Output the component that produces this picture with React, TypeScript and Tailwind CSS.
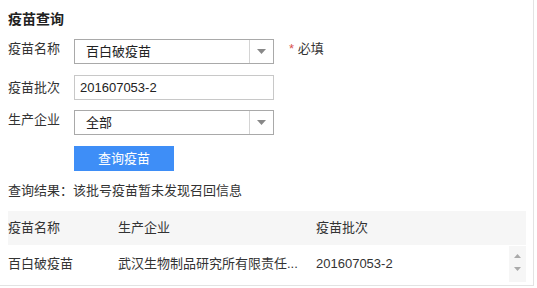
import React from 'react';

const font = { fontFamily: '"Liberation Sans", "Noto Sans CJK SC", sans-serif' };

function Arrow() {
  return (
    <svg width="9" height="5" viewBox="0 0 9 5">
      <path d="M0 0h9L4.5 5z" fill="#888" />
    </svg>
  );
}

function SelectBox({ value }: { value: string }) {
  return (
    <div className="flex h-[25px] w-[200px] items-stretch border border-[#a9a9a9] bg-white">
      <div className="flex flex-1 items-center pl-[11px] text-[13px] text-[#222]">{value}</div>
      <div className="flex w-[24px] items-center justify-center border-l border-[#d4d4d4]">
        <Arrow />
      </div>
    </div>
  );
}

export default function App() {
  return (
    <div className="h-[288px] w-[537px] bg-white text-[#333]" style={font}>
      <div className="h-[286px] w-[534px] border-r border-b border-[#e3e3e3] pl-2">
        <h1 className="pt-[9px] text-[14px] font-bold leading-[20px] text-[#222]">疫苗查询</h1>

        <div className="mt-[10px] flex items-start">
          <span className="w-[66px] pt-[1px] text-[13px] leading-[18px]">疫苗名称</span>
          <SelectBox value="百白破疫苗" />
          <span className="ml-[15px] pt-[1px] text-[13px] leading-[18px]">
            <span className="text-[#d9534f]">*</span> 必填
          </span>
        </div>

        <div className="mt-[11px] flex items-center">
          <span className="w-[66px] text-[13px] leading-[18px]">疫苗批次</span>
          <div className="flex h-[25px] w-[200px] items-center border border-[#c8c8c8] pl-[5px] text-[13px] text-[#222]">
            201607053-2
          </div>
        </div>

        <div className="mt-[10px] flex items-start">
          <span className="w-[66px] pt-[1px] text-[13px] leading-[18px]">生产企业</span>
          <SelectBox value="全部" />
        </div>

        <button className="ml-[66px] mt-[11px] flex h-[25px] w-[100px] items-center justify-center bg-[#3e8ef7] text-[13px] text-white">
          查询疫苗
        </button>

        <p className="mt-[11px] text-[13px] leading-[18px]">查询结果：该批号疫苗暂未发现召回信息</p>

        <div className="mt-[11px] w-[518px] text-[13px]">
          <div className="flex h-[34px] items-center bg-[#f6f6f6]">
            <span className="w-[110px]">疫苗名称</span>
            <span className="w-[198px]">生产企业</span>
            <span>疫苗批次</span>
          </div>
          <div className="flex h-[37px] items-center">
            <span className="w-[110px]">百白破疫苗</span>
            <span className="w-[198px] truncate pr-[6px]">武汉生物制品研究所有限责任...</span>
            <span className="flex-1">201607053-2</span>
            <div className="flex h-[36px] w-[17px] flex-col items-center justify-start gap-[9px] bg-[#f6f6f6] pt-[8px]">
              <svg width="7" height="4" viewBox="0 0 7 4"><path d="M0 4h7L3.5 0z" fill="#aaa" /></svg>
              <svg width="7" height="4" viewBox="0 0 7 4"><path d="M0 0h7L3.5 4z" fill="#aaa" /></svg>
            </div>
          </div>
        </div>
      </div>
    </div>
  );
}
